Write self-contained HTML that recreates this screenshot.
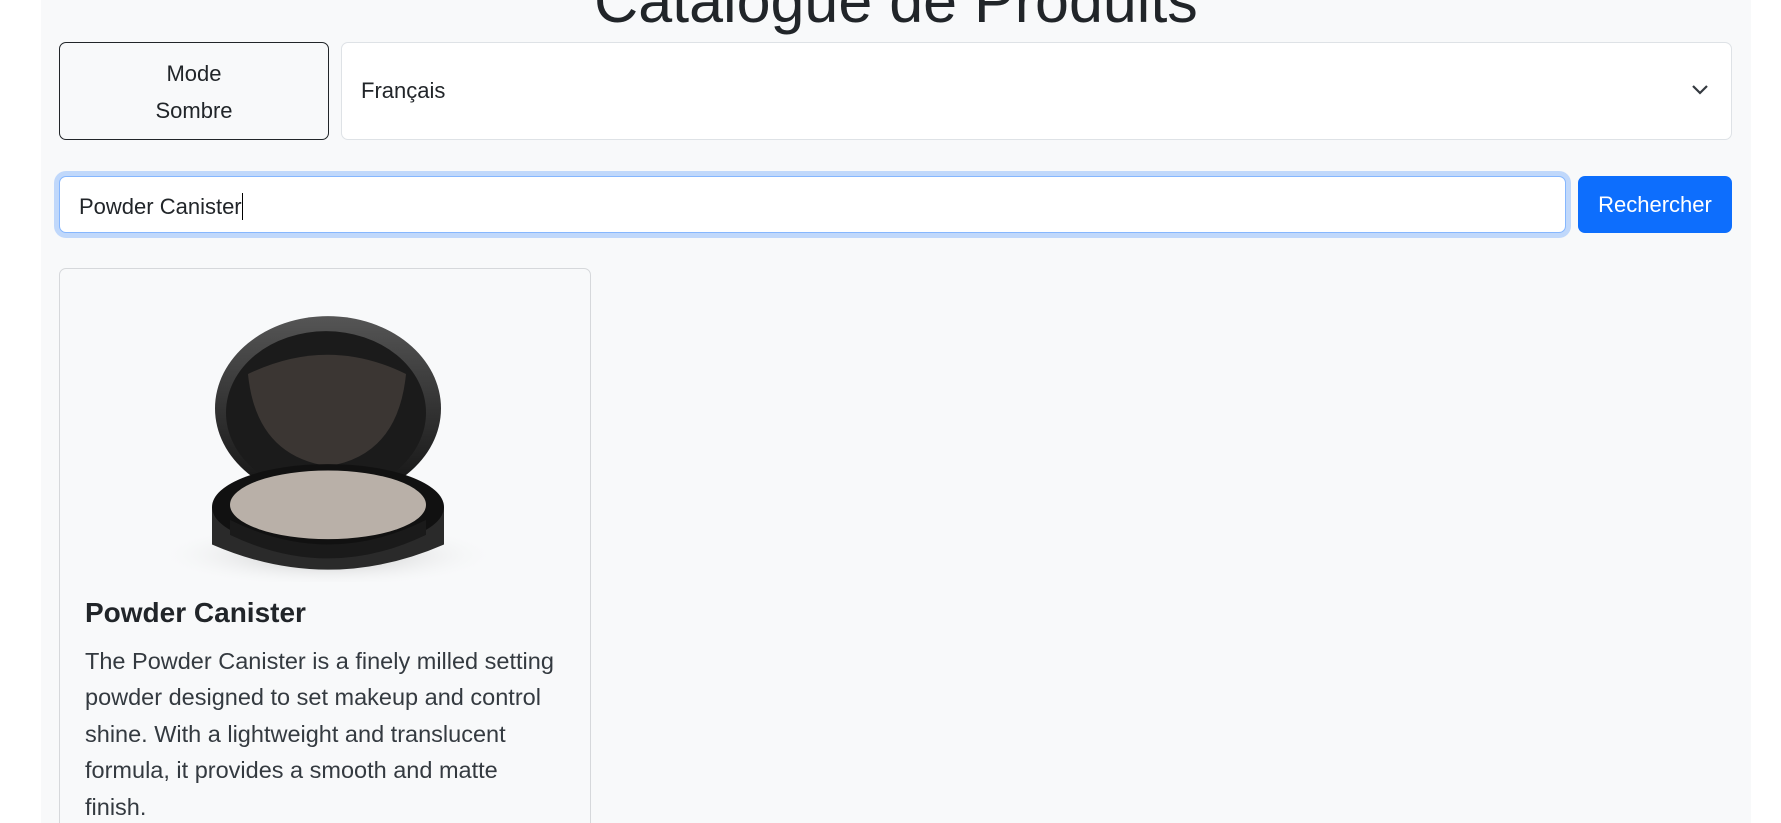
<!DOCTYPE html>
<html><head><meta charset="utf-8"><style>
*{box-sizing:border-box;margin:0;padding:0}
body{width:1781px;height:823px;overflow:hidden;background:#fff;font-family:"Liberation Sans",sans-serif;color:#212529;position:relative}
.main{position:absolute;left:41px;top:0;width:1710px;height:823px;background:#f8f9fa;overflow:hidden}
h1{position:absolute;left:0;width:1710px;text-align:center;top:-34px;font-size:61px;font-weight:normal;line-height:70px;color:#212529}
.mode{position:absolute;left:18px;top:42px;width:270px;height:98px;border:1px solid #212529;border-radius:7px;font-size:22px;line-height:37px;text-align:center;padding-top:12px}
.sel{position:absolute;left:300px;top:42px;width:1391px;height:98px;border:1px solid #dee2e6;border-radius:7px;background:#fff;font-size:22px;padding:35px 0 0 19px}
.sel svg{position:absolute;right:22px;top:41px}
.inp{position:absolute;left:18px;top:176px;width:1507px;height:57px;border:1px solid #86b7fe;border-radius:7px;background:#fff;box-shadow:0 0 0 5px #c0d8fb;font-size:22px;padding:16px 0 0 19px}
.cur{display:inline-block;width:1px;height:27px;background:#000;vertical-align:-6px}
.btn{position:absolute;left:1537px;top:176px;width:154px;height:57px;background:#0d6efd;border-radius:7px;color:#fff;font-size:22px;text-align:center;line-height:57px}
.card{position:absolute;left:18px;top:268px;width:532px;height:600px;border:1px solid #d6d8db;border-radius:7px}
.card h5{position:absolute;left:25px;top:328px;font-size:28px;font-weight:bold;color:#212529}
.card p{position:absolute;left:25px;top:374px;width:500px;font-size:23.5px;line-height:36.4px;color:#343a40}
</style></head><body>
<div class="main">
<h1>Catalogue de Produits</h1>
<div class="mode">Mode<br>Sombre</div>
<div class="sel">Français<svg width="18" height="12" viewBox="0 0 18 12"><path d="M2 2l7 7 7-7" fill="none" stroke="#343a40" stroke-width="2.2"/></svg></div>
<div class="inp">Powder Canister<span class="cur"></span></div>
<div class="btn">Rechercher</div>
<div class="card">
<svg style="position:absolute;left:88px;top:45px" width="360" height="268" viewBox="0 0 360 250" preserveAspectRatio="none">
<defs><radialGradient id="sh" cx="50%" cy="50%" r="50%"><stop offset="0" stop-color="#bbb"/><stop offset="1" stop-color="#f8f9fa" stop-opacity="0"/></radialGradient>
<linearGradient id="lid" x1="0" y1="0" x2="0" y2="1"><stop offset="0" stop-color="#555"/><stop offset="1" stop-color="#111"/></linearGradient></defs>
<ellipse cx="180" cy="225" rx="170" ry="30" fill="url(#sh)"/>
<ellipse cx="180" cy="88" rx="113" ry="86" fill="url(#lid)"/>
<ellipse cx="178" cy="92" rx="100" ry="76" fill="#1b1b1b"/>
<path d="M100 56 Q180 20 258 56 Q250 132 180 142 Q108 132 100 56Z" fill="#3b3633"/>
<path d="M64 180 L64 215 Q180 262 296 215 L296 180Z" fill="#2a2a2a"/>
<ellipse cx="180" cy="180" rx="116" ry="40" fill="#111"/>
<ellipse cx="180" cy="178" rx="98" ry="32" fill="#b9b0a8"/>
<path d="M82 192 Q180 238 278 192 L278 206 Q180 250 82 206Z" fill="#1a1a1a"/>
</svg>
<h5>Powder Canister</h5>
<p>The Powder Canister is a finely milled setting powder designed to set makeup and control shine. With a lightweight and translucent formula, it provides a smooth and matte<br>finish.</p>
</div>
</div>
</body></html>
